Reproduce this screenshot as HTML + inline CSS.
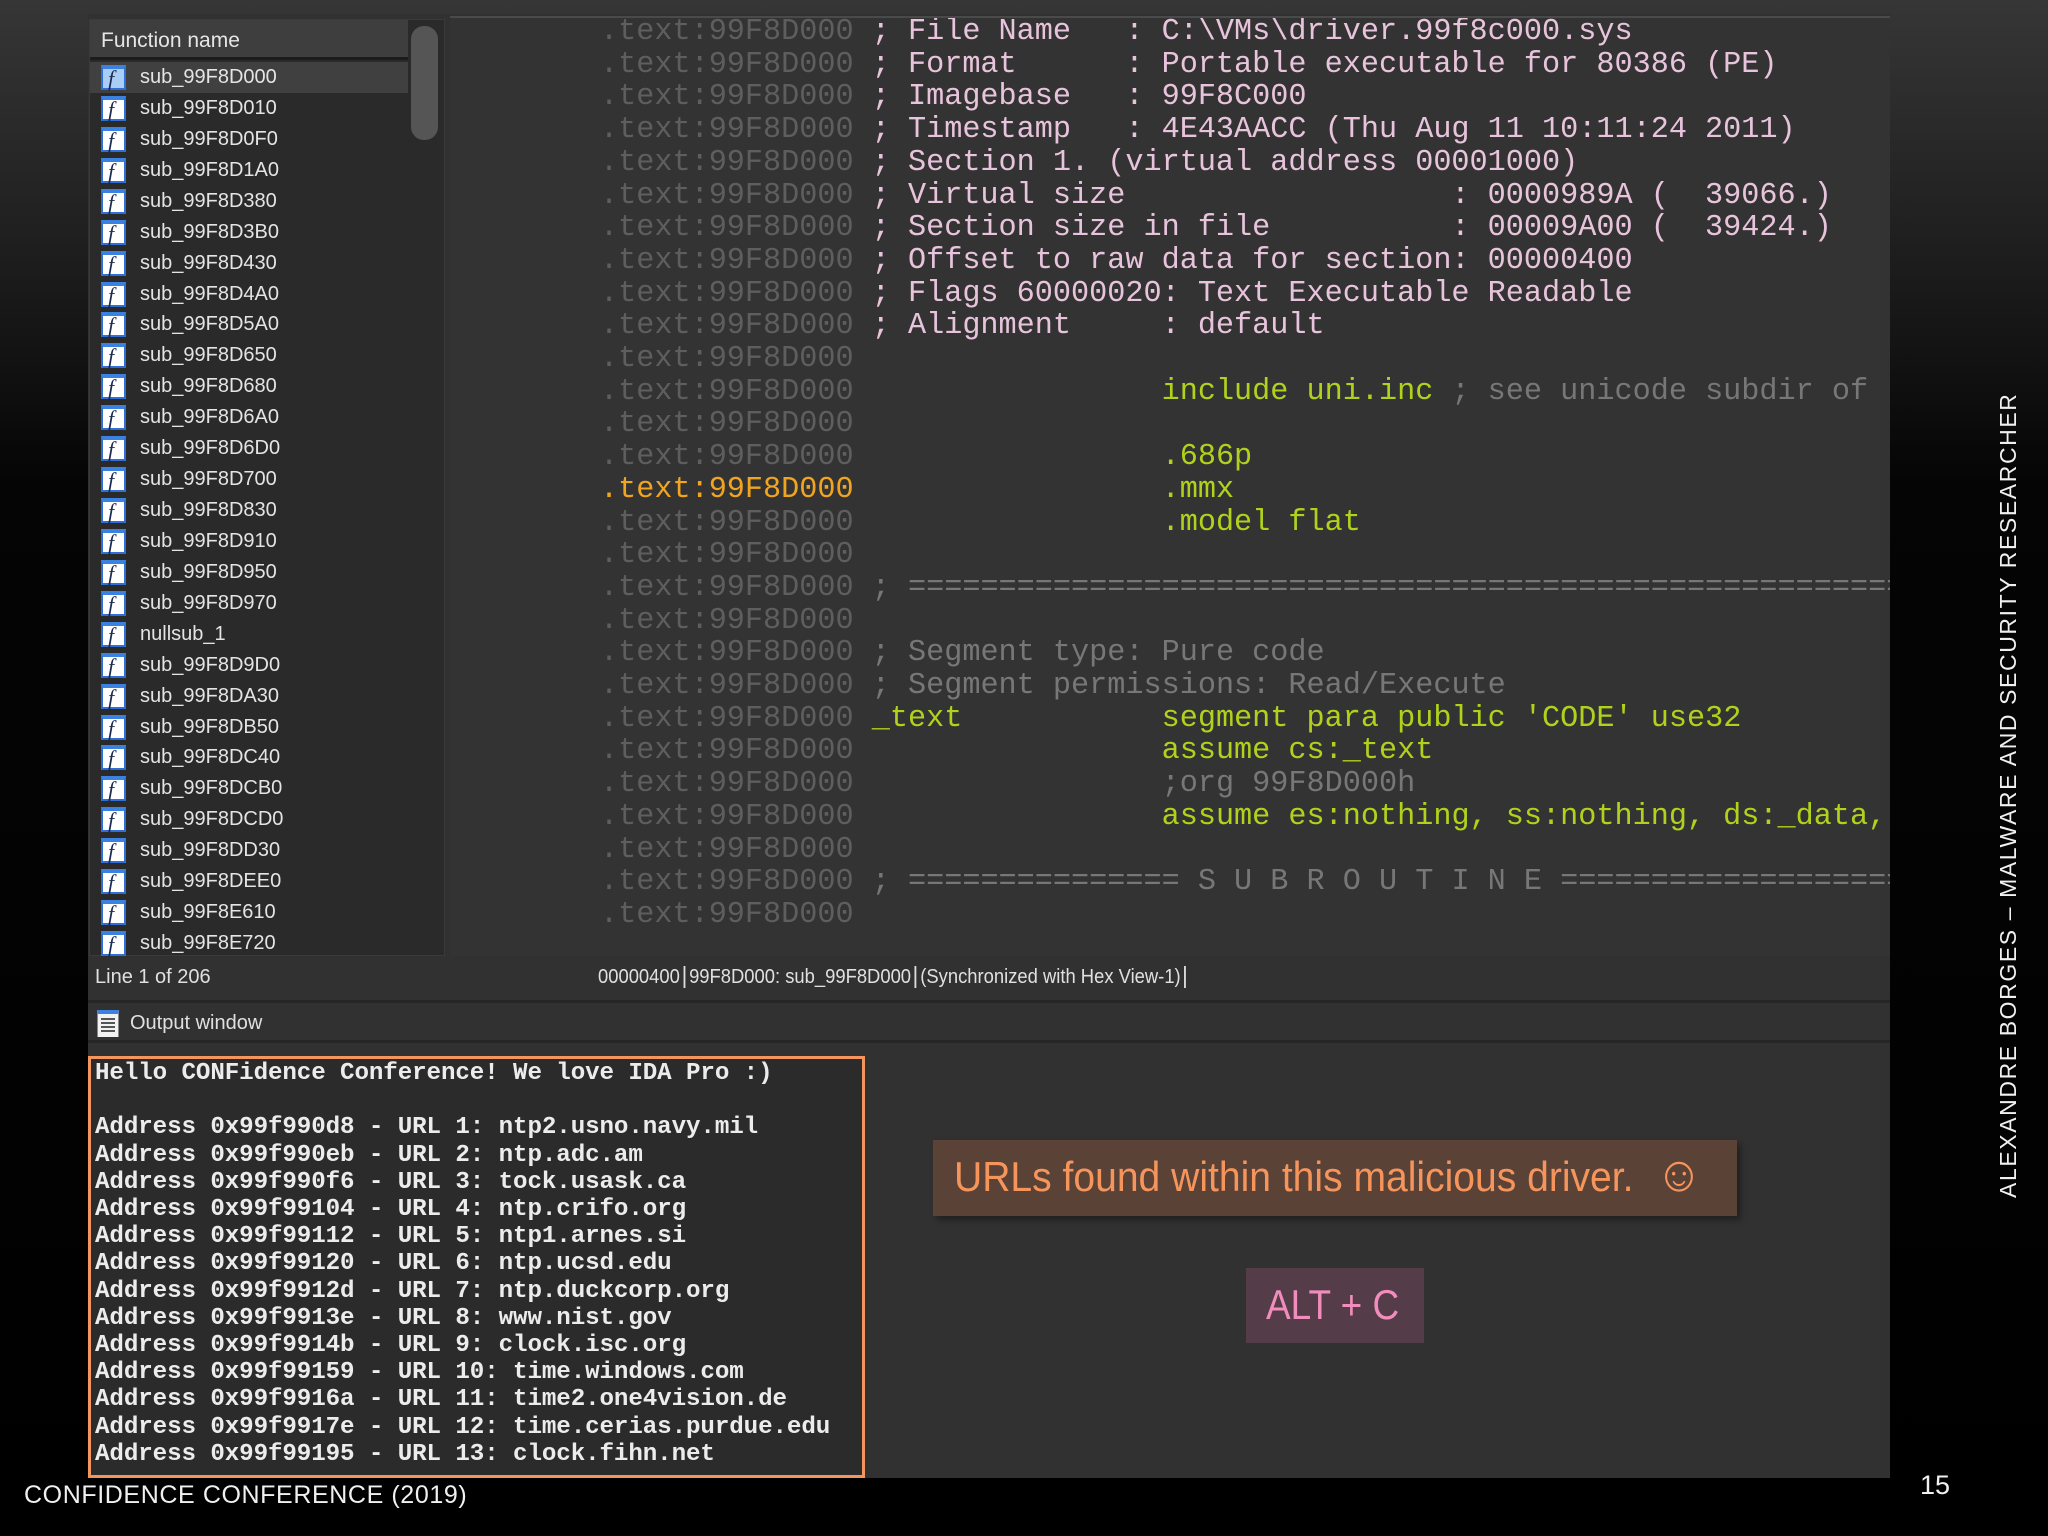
<!DOCTYPE html>
<html><head><meta charset="utf-8">
<style>
*{margin:0;padding:0;box-sizing:border-box}
body{width:2048px;height:1536px;overflow:hidden;position:relative;background:linear-gradient(#363636 0px,#1e1e1e 250px,#050505 480px,#000 1536px);font-family:"Liberation Sans",sans-serif}
.abs{position:absolute}
#win{left:88px;top:14px;width:1802px;height:1464px;background:#313131}
#code{left:450px;top:16px;width:1440px;height:940px;background:#333333;overflow:hidden;border-top:2px solid #4a4a4a}
#code pre{position:absolute;left:150px;top:-2px;font-family:"Liberation Mono",monospace;font-size:30.2px;line-height:32.7px;color:#e8c4dc;white-space:pre}
.a{color:#5e5e5e}.o{color:#f0a420}.g{color:#b0d21c}.c{color:#777}
#fp{left:89px;top:19px;width:356px;height:937px;background:#2a2a2a;border:1px solid #3a3a3a}
#fh{left:90px;top:20px;width:318px;height:40px;background:#3e3e3e;border-bottom:3px solid #1c1c1c;color:#e6e6e6;font-size:21px;padding:9px 0 0 11px}
#sb{left:411px;top:26px;width:27px;height:114px;background:#555;border-radius:13px}
.row{position:absolute;left:90px;width:318px;height:31px;color:#e4e4e4;font-size:20px}
.row.sel{background:#404040}
.row span{position:absolute;left:50px;top:4px}
.ic{position:absolute;left:11px;top:3px;width:25px;height:25px;background:#fff;border:2px solid #2f6fd8;border-top:4px solid #3b82e0}
.row.sel .ic{background:#a9cdf5}
.ic i{position:absolute;left:5px;top:-3px;font-family:"Liberation Serif",serif;font-size:22px;color:#1a2a50;font-style:italic}
.st{color:#e0e0e0;font-size:20px}
#out{left:88px;top:1056px;width:777px;height:422px;border:3px solid #f3955c;background:#2b2b2b}
#out pre{position:absolute;left:4px;top:1px;font-family:"Liberation Mono",monospace;font-weight:bold;font-size:24.2px;line-height:27.2px;color:#ececec;letter-spacing:-0.1px}
</style></head><body>
<div class="abs" id="win"></div>
<div class="abs" style="left:88px;top:1000px;width:1802px;height:3px;background:#262626"></div>
<div class="abs" style="left:88px;top:1040px;width:1802px;height:3px;background:#262626"></div>
<div class="abs" id="code"><pre><span class="a">.text:99F8D000</span> ; File Name   : C:\VMs\driver.99f8c000.sys
<span class="a">.text:99F8D000</span> ; Format      : Portable executable for 80386 (PE)
<span class="a">.text:99F8D000</span> ; Imagebase   : 99F8C000
<span class="a">.text:99F8D000</span> ; Timestamp   : 4E43AACC (Thu Aug 11 10:11:24 2011)
<span class="a">.text:99F8D000</span> ; Section 1. (virtual address 00001000)
<span class="a">.text:99F8D000</span> ; Virtual size                  : 0000989A (  39066.)
<span class="a">.text:99F8D000</span> ; Section size in file          : 00009A00 (  39424.)
<span class="a">.text:99F8D000</span> ; Offset to raw data for section: 00000400
<span class="a">.text:99F8D000</span> ; Flags 60000020: Text Executable Readable
<span class="a">.text:99F8D000</span> ; Alignment     : default
<span class="a">.text:99F8D000</span>
<span class="a">.text:99F8D000</span>                 <span class="g">include uni.inc</span> <span class="c">; see unicode subdir of</span>
<span class="a">.text:99F8D000</span>
<span class="a">.text:99F8D000</span>                 <span class="g">.686p</span>
<span class="o">.text:99F8D000</span>                 <span class="g">.mmx</span>
<span class="a">.text:99F8D000</span>                 <span class="g">.model flat</span>
<span class="a">.text:99F8D000</span>
<span class="a">.text:99F8D000</span> <span class="c">; ===============================================================</span>
<span class="a">.text:99F8D000</span>
<span class="a">.text:99F8D000</span> <span class="c">; Segment type: Pure code</span>
<span class="a">.text:99F8D000</span> <span class="c">; Segment permissions: Read/Execute</span>
<span class="a">.text:99F8D000</span> <span class="g">_text</span>           <span class="g">segment para public 'CODE' use32</span>
<span class="a">.text:99F8D000</span>                 <span class="g">assume cs:_text</span>
<span class="a">.text:99F8D000</span>                 <span class="c">;org 99F8D000h</span>
<span class="a">.text:99F8D000</span>                 <span class="g">assume es:nothing, ss:nothing, ds:_data,</span>
<span class="a">.text:99F8D000</span>
<span class="a">.text:99F8D000</span> <span class="c">; =============== S U B R O U T I N E ===========================</span>
<span class="a">.text:99F8D000</span></pre></div>

<div class="abs" id="fp"></div>
<div class="abs" id="fh">Function name</div>
<div class="abs" id="sb"></div>
<div class="row sel" style="top:62px"><div class="ic"><i>f</i></div><span>sub_99F8D000</span></div>
<div class="row" style="top:93px"><div class="ic"><i>f</i></div><span>sub_99F8D010</span></div>
<div class="row" style="top:124px"><div class="ic"><i>f</i></div><span>sub_99F8D0F0</span></div>
<div class="row" style="top:155px"><div class="ic"><i>f</i></div><span>sub_99F8D1A0</span></div>
<div class="row" style="top:186px"><div class="ic"><i>f</i></div><span>sub_99F8D380</span></div>
<div class="row" style="top:217px"><div class="ic"><i>f</i></div><span>sub_99F8D3B0</span></div>
<div class="row" style="top:248px"><div class="ic"><i>f</i></div><span>sub_99F8D430</span></div>
<div class="row" style="top:279px"><div class="ic"><i>f</i></div><span>sub_99F8D4A0</span></div>
<div class="row" style="top:309px"><div class="ic"><i>f</i></div><span>sub_99F8D5A0</span></div>
<div class="row" style="top:340px"><div class="ic"><i>f</i></div><span>sub_99F8D650</span></div>
<div class="row" style="top:371px"><div class="ic"><i>f</i></div><span>sub_99F8D680</span></div>
<div class="row" style="top:402px"><div class="ic"><i>f</i></div><span>sub_99F8D6A0</span></div>
<div class="row" style="top:433px"><div class="ic"><i>f</i></div><span>sub_99F8D6D0</span></div>
<div class="row" style="top:464px"><div class="ic"><i>f</i></div><span>sub_99F8D700</span></div>
<div class="row" style="top:495px"><div class="ic"><i>f</i></div><span>sub_99F8D830</span></div>
<div class="row" style="top:526px"><div class="ic"><i>f</i></div><span>sub_99F8D910</span></div>
<div class="row" style="top:557px"><div class="ic"><i>f</i></div><span>sub_99F8D950</span></div>
<div class="row" style="top:588px"><div class="ic"><i>f</i></div><span>sub_99F8D970</span></div>
<div class="row" style="top:619px"><div class="ic"><i>f</i></div><span>nullsub_1</span></div>
<div class="row" style="top:650px"><div class="ic"><i>f</i></div><span>sub_99F8D9D0</span></div>
<div class="row" style="top:681px"><div class="ic"><i>f</i></div><span>sub_99F8DA30</span></div>
<div class="row" style="top:712px"><div class="ic"><i>f</i></div><span>sub_99F8DB50</span></div>
<div class="row" style="top:742px"><div class="ic"><i>f</i></div><span>sub_99F8DC40</span></div>
<div class="row" style="top:773px"><div class="ic"><i>f</i></div><span>sub_99F8DCB0</span></div>
<div class="row" style="top:804px"><div class="ic"><i>f</i></div><span>sub_99F8DCD0</span></div>
<div class="row" style="top:835px"><div class="ic"><i>f</i></div><span>sub_99F8DD30</span></div>
<div class="row" style="top:866px"><div class="ic"><i>f</i></div><span>sub_99F8DEE0</span></div>
<div class="row" style="top:897px"><div class="ic"><i>f</i></div><span>sub_99F8E610</span></div>
<div class="row" style="top:928px"><div class="ic"><i>f</i></div><span>sub_99F8E720</span></div>

<div class="abs st" style="left:95px;top:966px">Line 1 of 206</div>
<div class="abs st" style="left:598px;top:966px;transform:scaleX(0.92);transform-origin:left;white-space:nowrap">00000400<span style="border-left:2px solid #ddd;margin:0 4px"></span>99F8D000: sub_99F8D000<span style="border-left:2px solid #ddd;margin:0 4px"></span>(Synchronized with Hex View-1)<span style="border-left:2px solid #ddd;margin-left:4px"></span></div>
<div class="abs" style="left:97px;top:1010px;width:22px;height:27px;background:#f2f2f2;border-top:4px solid #3b82e0;border-left:1px solid #888;border-right:1px solid #888"><div style="margin:4px 3px;height:14px;background:repeating-linear-gradient(#555 0 2px,transparent 2px 4px)"></div></div>
<div class="abs st" style="left:130px;top:1012px">Output window</div>

<div class="abs" id="out"><pre>Hello CONFidence Conference! We love IDA Pro :)

Address 0x99f990d8 - URL 1: ntp2.usno.navy.mil
Address 0x99f990eb - URL 2: ntp.adc.am
Address 0x99f990f6 - URL 3: tock.usask.ca
Address 0x99f99104 - URL 4: ntp.crifo.org
Address 0x99f99112 - URL 5: ntp1.arnes.si
Address 0x99f99120 - URL 6: ntp.ucsd.edu
Address 0x99f9912d - URL 7: ntp.duckcorp.org
Address 0x99f9913e - URL 8: www.nist.gov
Address 0x99f9914b - URL 9: clock.isc.org
Address 0x99f99159 - URL 10: time.windows.com
Address 0x99f9916a - URL 11: time2.one4vision.de
Address 0x99f9917e - URL 12: time.cerias.purdue.edu
Address 0x99f99195 - URL 13: clock.fihn.net</pre></div>

<div class="abs" style="left:933px;top:1140px;width:804px;height:76px;background:#5a4237;box-shadow:4px 4px 6px rgba(0,0,0,.35)"></div>
<div class="abs" style="left:954px;top:1153px;font-size:42px;color:#f5955c;white-space:nowrap;transform:scaleX(0.93);transform-origin:left">URLs found within this malicious driver.&nbsp; <span style="font-size:50px;line-height:40px">☺</span></div>
<div class="abs" style="left:1246px;top:1268px;width:178px;height:75px;background:#553c49"></div>
<div class="abs" style="left:1266px;top:1281px;font-size:42px;color:#f28cbc;white-space:nowrap;transform:scaleX(0.88);transform-origin:left">ALT + C</div>

<div class="abs" style="left:1995px;top:1198px;transform:rotate(-90deg);transform-origin:left top;color:#f0f0f0;font-size:23px;letter-spacing:1.6px;white-space:nowrap;width:810px;height:26px">ALEXANDRE BORGES – MALWARE AND SECURITY RESEARCHER</div>
<div class="abs" style="left:24px;top:1481px;color:#f0f0f0;font-size:25px;letter-spacing:0.6px;white-space:nowrap">CONFIDENCE CONFERENCE (2019)</div>
<div class="abs" style="left:1920px;top:1470px;color:#f0f0f0;font-size:27px">15</div>
</body></html>
